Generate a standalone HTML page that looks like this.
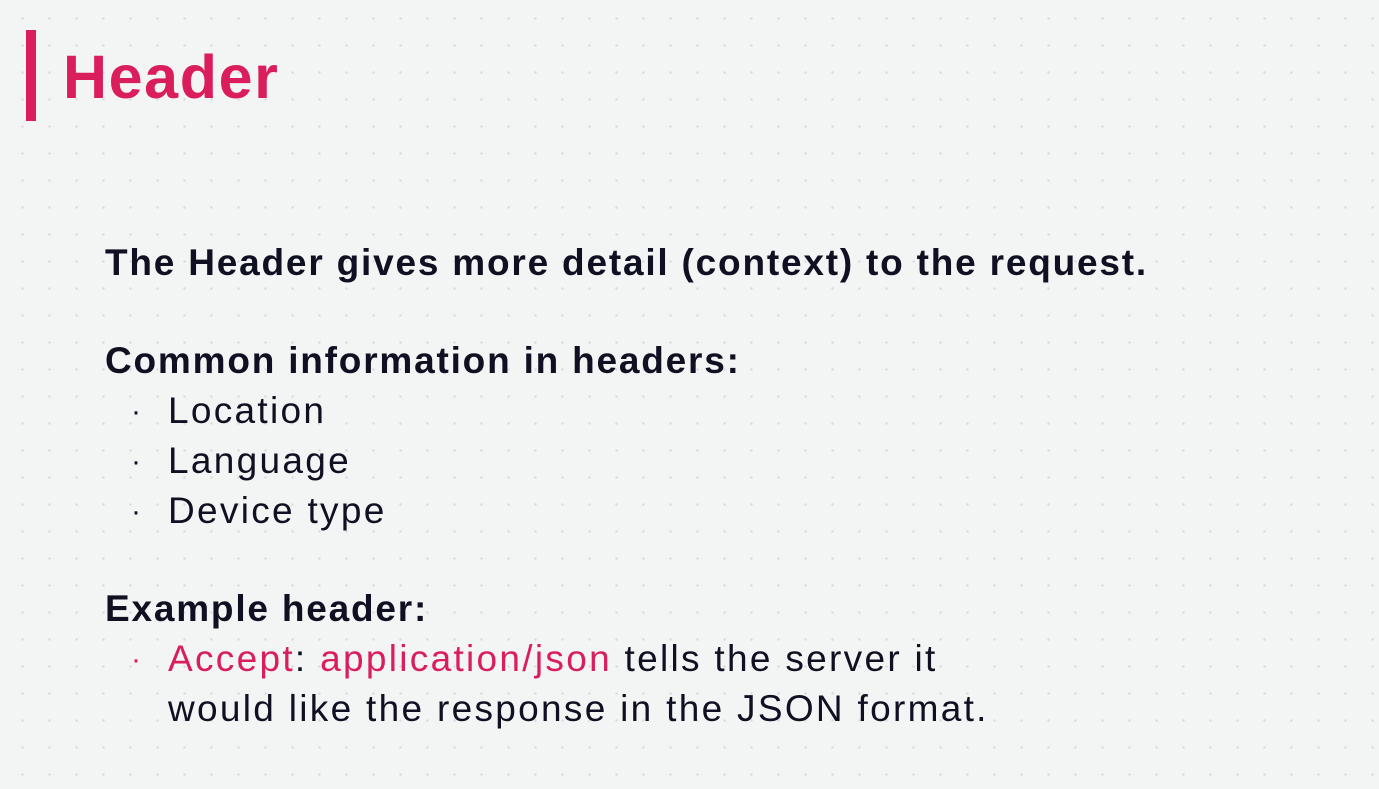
<!DOCTYPE html>
<html><head><style>
html,body{margin:0;padding:0}
body{width:1379px;height:789px;overflow:hidden;background-color:#f3f4f4;
background-image:radial-gradient(circle,#d8dadb 1px,transparent 1.4px);background-size:27px 27px;background-position:9px 5px;
font-family:"Liberation Sans",sans-serif;color:#0f1122;position:relative}
.bar{position:absolute;left:26px;top:30px;width:10px;height:91px;background:#d91e5b}
h1{position:absolute;left:63px;top:37px;margin:0;font-size:61px;line-height:80px;color:#d91e5b;font-weight:bold;letter-spacing:1.6px}
.t{position:absolute;left:105px;font-size:37px;line-height:50px;white-space:nowrap;letter-spacing:2.3px}
.b{font-weight:bold;letter-spacing:1.8px}
.li{left:168px}
.d{position:absolute;left:131px;font-size:30px;line-height:50px}
.p{color:#d91e5b}
</style></head><body>
<div class="bar"></div>
<h1>Header</h1>
<div class="t b" style="top:238px">The Header gives more detail (context) to the request.</div>
<div class="t b" style="top:336px">Common information in headers:</div>
<div class="d" style="top:387px">·</div><div class="t li" style="top:386px">Location</div>
<div class="d" style="top:437px">·</div><div class="t li" style="top:436px">Language</div>
<div class="d" style="top:487px">·</div><div class="t li" style="top:486px">Device type</div>
<div class="t b" style="top:584px">Example header:</div>
<div class="d p" style="top:635px">·</div><div class="t li" style="top:634px"><span class="p">Accept</span>: <span class="p">application/json</span> tells the server it</div>
<div class="t li" style="top:684px">would like the response in the JSON format.</div>
</body></html>
